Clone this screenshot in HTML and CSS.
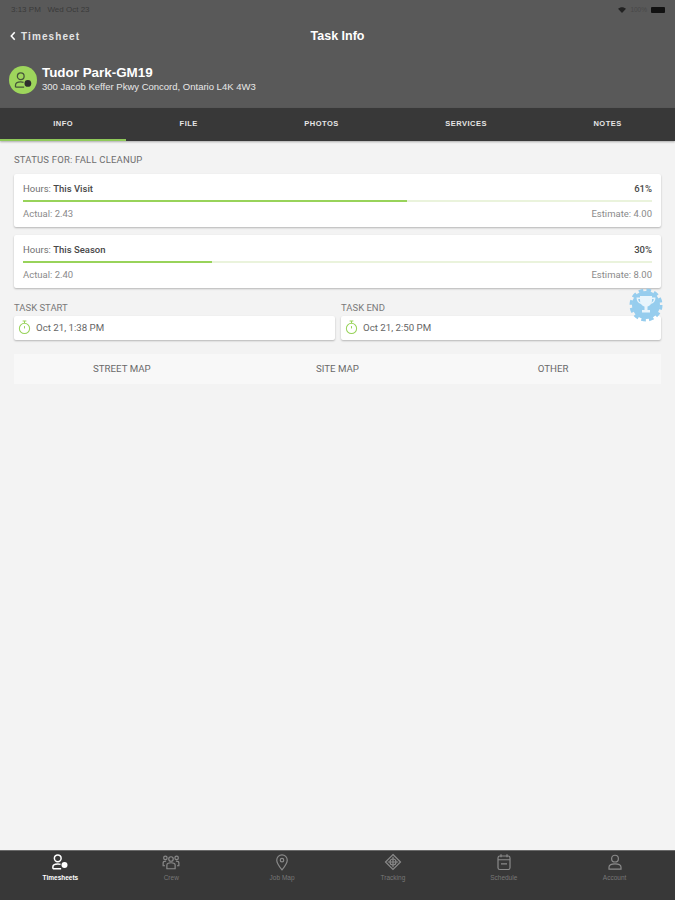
FILE: index.html
```html
<!DOCTYPE html>
<html lang="en">
  <head>
    <meta charset="UTF-8" />
    <meta name="viewport" content="width=device-width, initial-scale=1.0" />
    <title>Task Info</title>
    <link rel="stylesheet" href="styles.css">
  </head>
  <body>
    <header class="top">
      <div class="status-bar">
        <span>3:13 PM&nbsp;&nbsp;&nbsp;Wed Oct 23</span>
        <span class="status-right">
          <svg class="wifi" viewBox="0 0 12 9"><path d="M0 2.600C3.400-.6 8.600-.6 12 2.600L6 9z" /></svg>
          100%
          <span class="battery"></span>
        </span>
      </div>
      <div class="nav-row">
        <a class="back">
          <svg viewBox="0 0 7 11"><path d="M5.500 1 1.500 5.500l4 4.500" /></svg>
          Timesheet
        </a>
        <h1>Task Info</h1>
      </div>
      <div class="site-row">
        <div class="site-icon">
          <svg viewBox="0 0 24 24">
            <circle cx="9" cy="7" r="4.500" />
            <path d="M2 21.500v-2.500c0-2.800 2.800-4.500 7-4.500 1.500 0 2.800.2 3.800.6M2 21.500h11.500" />
            <circle class="dot" cx="18.500" cy="16.500" r="4.500" />
          </svg>
        </div>
        <div>
          <h2>Tudor Park-GM19</h2>
          <p>300 Jacob Keffer Pkwy Concord, Ontario L4K 4W3</p>
        </div>
      </div>
    </header>

    <nav class="tabs">
      <a class="active">INFO</a>
      <a>FILE</a>
      <a>PHOTOS</a>
      <a>SERVICES</a>
      <a>NOTES</a>
    </nav>

    <main class="content">
      <div class="section-label">STATUS FOR: FALL CLEANUP</div>

      <div class="card hours">
        <div class="hours-row">
          <span>Hours: <b>This Visit</b></span>
          <b>61%</b>
        </div>
        <div class="bar"><div class="bar-fill" style="width: 61%"></div></div>
        <div class="hours-row muted">
          <span>Actual: 2.43</span>
          <span>Estimate: 4.00</span>
        </div>
      </div>

      <div class="card hours">
        <div class="hours-row">
          <span>Hours: <b>This Season</b></span>
          <b>30%</b>
        </div>
        <div class="bar"><div class="bar-fill" style="width: 30%"></div></div>
        <div class="hours-row muted">
          <span>Actual: 2.40</span>
          <span>Estimate: 8.00</span>
        </div>
      </div>

      <div class="task-times">
        <div>
          <div class="time-label">TASK START</div>
          <div class="card time-card">
            <svg class="timer" viewBox="0 0 14 16"><path d="M5 1h4M7 1v2.500" /><circle cx="7" cy="9" r="5.500" /><path d="M7 6.500V9" /></svg>
            Oct 21, 1:38 PM
          </div>
        </div>
        <div>
          <div class="time-label">TASK END</div>
          <div class="card time-card">
            <svg class="timer" viewBox="0 0 14 16"><path d="M5 1h4M7 1v2.500" /><circle cx="7" cy="9" r="5.500" /><path d="M7 6.500V9" /></svg>
            Oct 21, 2:50 PM
          </div>
        </div>
        <svg class="trophy" viewBox="0 0 34 34">
          <circle class="seal" cx="17" cy="17" r="14" />
          <circle class="teeth" cx="17" cy="17" r="15" />
          <path class="cup" d="M11 8h12v4c0 3.500-2.200 6-4.500 6.500V22H21v2.500h-8V22h2.500v-3.500C13.200 18 11 15.500 11 12zM7.500 9.500H11v1.600H9.200c.1 1.700 1 2.800 2.400 3.500l.8 1.600C9.500 15.300 7.500 13.300 7.500 9.500zM26.500 9.500H23v1.600h1.800c-.1 1.700-1 2.800-2.400 3.500l-.8 1.600c2.900-.9 4.900-2.900 4.900-6.700z" />
        </svg>
      </div>

      <div class="map-tabs">
        <a>STREET MAP</a>
        <a>SITE MAP</a>
        <a>OTHER</a>
      </div>
    </main>

    <footer class="bottom-bar">
      <a class="active">
        <svg viewBox="0 0 24 24">
          <circle cx="9" cy="7" r="4.500" />
          <path d="M2.500 21v-2.500c0-2.500 2.500-4 6.500-4 1.500 0 2.800.2 3.800.6M2.500 21h11" />
          <circle class="dot" cx="18" cy="16" r="4" />
        </svg>
        Timesheets
      </a>
      <a>
        <svg viewBox="0 0 24 24">
          <circle cx="12" cy="8" r="3" />
          <circle cx="4.500" cy="6.500" r="2.300" />
          <circle cx="19.500" cy="6.500" r="2.300" />
          <path d="M6.500 21v-5c0-2 2-3 5.500-3s5.500 1 5.500 3v5zM4 17H1.500v-4c0-1.300 1.200-2.200 4-2.200M20 17h2.500v-4c0-1.300-1.200-2.200-4-2.200" />
        </svg>
        Crew
      </a>
      <a>
        <svg viewBox="0 0 24 24">
          <path d="M12 22.500C8 17.500 5 13.500 5 9.500a7 7 0 0 1 14 0c0 4-3 8-7 13z" />
          <circle cx="12" cy="9.500" r="2.300" />
        </svg>
        Job Map
      </a>
      <a>
        <svg viewBox="0 0 24 24">
          <path d="M12 2 22 12 12 22 2 12z" />
          <circle cx="12" cy="12" r="4" />
          <path d="M12 5v14M5 12h14" />
        </svg>
        Tracking
      </a>
      <a>
        <svg viewBox="0 0 24 24">
          <rect x="4" y="4" width="16" height="18" rx="2.500" />
          <path d="M8 1.500v4M16 1.500v4M4 9h16M8 14.500h8" />
        </svg>
        Schedule
      </a>
      <a>
        <svg viewBox="0 0 24 24">
          <circle cx="12" cy="7.500" r="4.500" />
          <path d="M4 21.500v-2.500c0-3 3-4.500 8-4.500s8 1.500 8 4.500v2.500z" />
        </svg>
        Account
      </a>
    </footer>
  </body>
</html>
```

FILE: styles.css
```css
* {
  box-sizing: border-box;
}
body {
  margin: 0;
  height: 900px;
  display: flex;
  flex-direction: column;
  background-color: #f3f3f3;
  font-family: "Liberation Sans", Arial, sans-serif;
  color: #555;
}
h1, h2, p {
  margin: 0;
}

/* header */
.top {
  height: 108px;
  background-color: #595959;
  color: white;
  flex-shrink: 0;
}
.status-bar {
  height: 16px;
  padding: 3px 10px 0 11px;
  display: flex;
  justify-content: space-between;
  align-items: center;
  font-size: 8px;
  color: #3a3a3a;
}
.status-right {
  display: flex;
  align-items: center;
  gap: 4px;
  font-size: 6.500px;
  color: #484848;
}
.wifi {
  width: 8px;
  height: 6px;
  fill: #222;
}
.battery {
  width: 14px;
  height: 6px;
  background: #111;
  border-radius: 1px;
}
.nav-row {
  position: relative;
  height: 30px;
  margin-top: 5px;
  display: flex;
  align-items: center;
  justify-content: center;
}
.nav-row h1 {
  font-size: 12.500px;
  font-weight: bold;
}
.back {
  position: absolute;
  left: 10px;
  display: flex;
  align-items: center;
  gap: 5px;
  font-size: 10px;
  font-weight: bold;
  letter-spacing: 1.100px;
  color: #e4e4e4;
}
.back svg {
  width: 6px;
  height: 10px;
  fill: none;
  stroke: white;
  stroke-width: 1.800;
}
.site-row {
  display: flex;
  align-items: center;
  gap: 5px;
  padding: 14px 0 0 9px;
}
.site-row h2 {
  font-size: 13.400px;
  line-height: 15px;
}
.site-row p {
  font-size: 9.500px;
  line-height: 14px;
  color: #e8e8e8;
}
.site-icon {
  width: 28px;
  height: 28px;
  border-radius: 50%;
  background-color: #9ed65c;
  padding: 5px;
}
.site-icon svg {
  display: block;
  fill: none;
  stroke: #46563a;
  stroke-width: 1.700;
}
.site-icon .dot {
  fill: #2e2e2e;
  stroke: none;
}

/* tabs */
.tabs {
  height: 33px;
  flex-shrink: 0;
  display: flex;
  background-color: #383838;
  box-shadow: 0 1px 2px rgba(0, 0, 0, 0.3);
}
.tabs a {
  flex: 1 1 auto;
  padding-top: 11px;
  text-align: center;
  font-size: 7.500px;
  font-weight: bold;
  letter-spacing: 0.5px;
  color: #e6e6e6;
}
.tabs a.active {
  border-bottom: 2px solid #8fc95a;
}

/* content */
.content {
  flex: 1;
  padding: 14px 14px 0;
  font-family: Roboto, sans-serif;
}
.section-label {
  font-size: 9.500px;
  line-height: 10px;
  letter-spacing: 0.2px;
  color: #6e6e6e;
  margin-bottom: 9px;
}
.card {
  background: white;
  border-radius: 2px;
  box-shadow: 0 1px 2px rgba(0, 0, 0, 0.25);
}
.hours {
  height: 53px;
  padding: 9px 9px 0;
  margin-bottom: 7.700px;
  font-size: 9.500px;
}
.hours-row {
  display: flex;
  justify-content: space-between;
  line-height: 11px;
  color: #707070;
}
.hours-row b {
  color: #484848;
  font-weight: 500;
}
.hours-row.muted {
  color: #8a8a8a;
}
.bar {
  height: 2px;
  margin: 6px 0 6px;
  background-color: #eaf3dc;
}
.bar-fill {
  height: 100%;
  background-color: #98d35a;
}
.task-times {
  position: relative;
  display: grid;
  grid-template-columns: 321px 320px;
  gap: 6px;
  margin-top: 15px;
}
.time-label {
  font-size: 9.500px;
  line-height: 10px;
  color: #7a7a7a;
  margin-bottom: 3px;
}
.time-card {
  height: 24px;
  padding-left: 4px;
  display: flex;
  align-items: center;
  gap: 5px;
  font-size: 9.700px;
  color: #666;
}
.timer {
  width: 13px;
  height: 15px;
  fill: none;
  stroke: #98d35a;
  stroke-width: 1.100;
}
.trophy {
  position: absolute;
  right: -2px;
  top: -15px;
  width: 34px;
  height: 34px;
}
.trophy .seal {
  fill: #96cdee;
}
.trophy .teeth {
  fill: none;
  stroke: #96cdee;
  stroke-width: 3;
  stroke-dasharray: 4.600 3.254;
}
.trophy .cup {
  fill: #e9f5fc;
}
.map-tabs {
  height: 30px;
  margin-top: 14px;
  display: grid;
  grid-template-columns: repeat(3, 1fr);
  align-items: center;
  text-align: center;
  background-color: #f8f8f8;
  font-size: 9.700px;
  color: #6a6a6a;
}

/* bottom bar */
.bottom-bar {
  height: 50px;
  flex-shrink: 0;
  padding: 2px 5px 0;
  display: grid;
  grid-template-columns: repeat(6, 1fr);
  background-color: #383838;
  border-top: 1px solid #6a6a6a;
}
.bottom-bar a {
  display: flex;
  flex-direction: column;
  align-items: center;
  gap: 3px;
  font-size: 6.500px;
  line-height: 8px;
  color: #777;
}
.bottom-bar svg {
  width: 18px;
  height: 18px;
  fill: none;
  stroke: #8a8a8a;
  stroke-width: 1.600;
}
.bottom-bar .dot {
  fill: #8a8a8a;
  stroke: none;
}
.bottom-bar a.active {
  color: white;
  font-weight: bold;
}
.bottom-bar a.active svg {
  stroke: white;
  stroke-width: 2;
}
.bottom-bar a.active .dot {
  fill: white;
  stroke: none;
}
```
